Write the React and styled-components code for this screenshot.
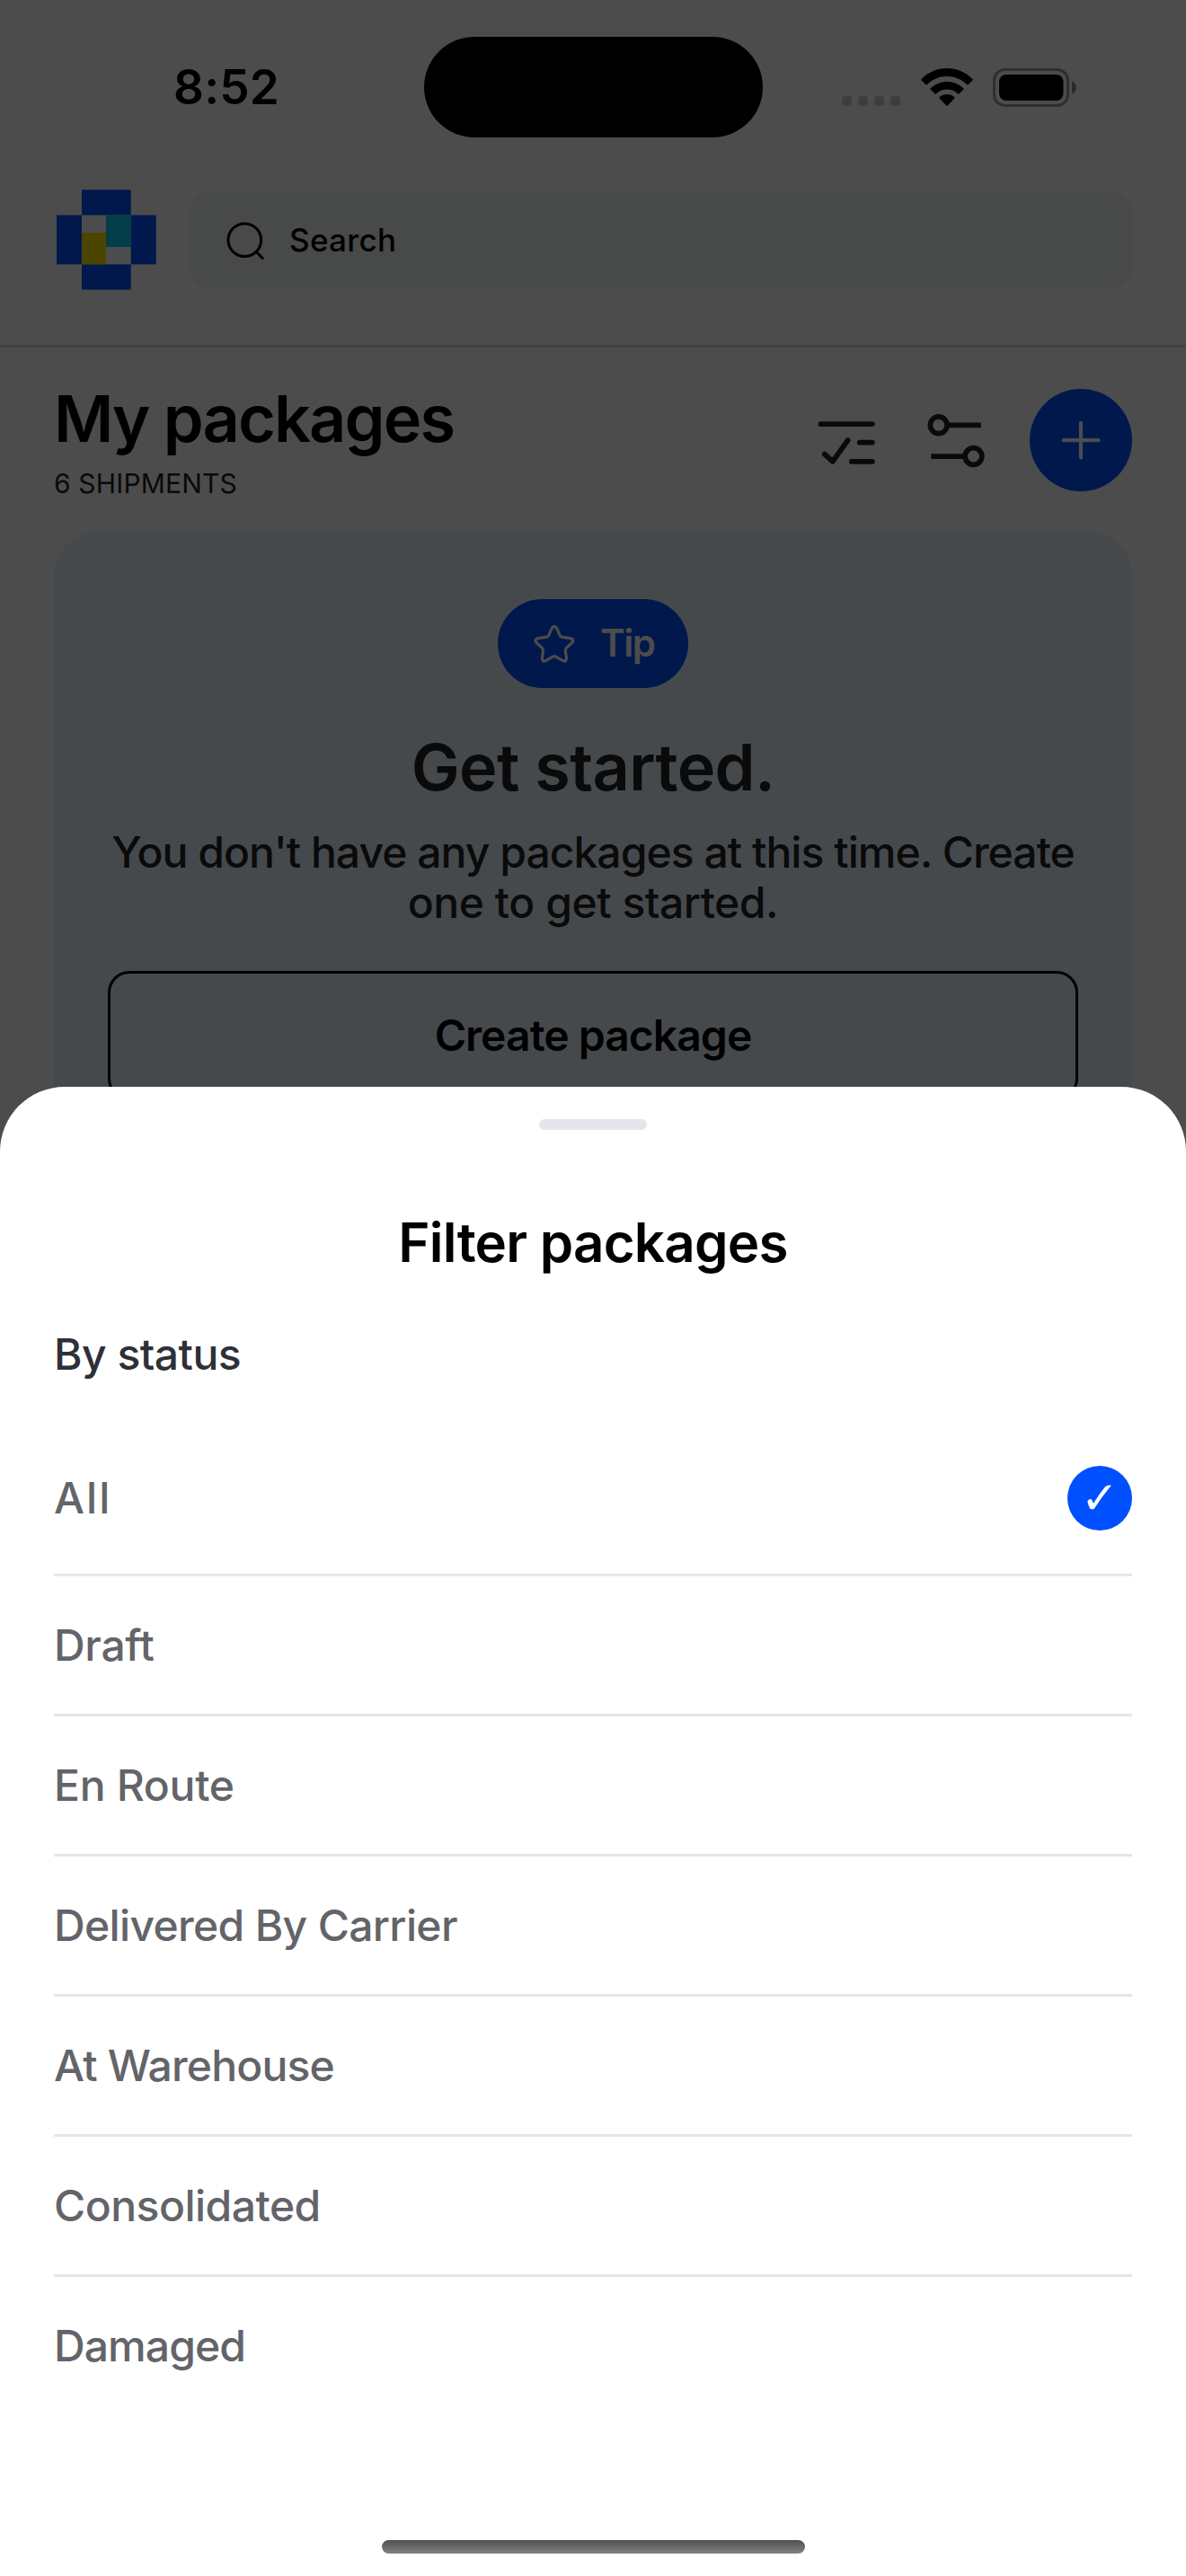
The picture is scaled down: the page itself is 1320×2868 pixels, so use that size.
import React from 'react';
import styled, { createGlobalStyle } from 'styled-components';

const GlobalStyle = createGlobalStyle`
  *, *::before, *::after { box-sizing: border-box; }
  body {
    margin: 0;
    background: #fff;
    font-family: Inter, 'Liberation Sans', sans-serif;
    -webkit-font-smoothing: antialiased;
  }
`;

const BLUE = '#0050ff';

const Screen = styled.div`
  position: relative;
  width: 1320px;
  height: 2868px;
  overflow: hidden;
  background: #fff;
`;

/* Status bar */
const StatusBar = styled.div`
  display: grid;
  grid-template-columns: 471.5px 377px 1fr;
  align-items: center;
  height: 194px;
`;

const Clock = styled.span`
  padding-left: 193px;
  font-size: 53px;
  font-weight: 600;
  line-height: 64px;
  letter-spacing: 0.2px;
`;

const Island = styled.div`
  height: 111.5px;
  border-radius: 56px;
  background: #000;
`;

const Indicators = styled.div`
  display: flex;
  align-items: center;
  gap: 22.5px;
  padding-left: 88.5px;
`;

/* Header */
const Header = styled.header`
  display: flex;
  align-items: flex-start;
  gap: 36px;
  height: 193px;
  padding: 16px 60px 0;
  border-bottom: 3px solid #dcdcdc;
`;

const SearchField = styled.div`
  display: flex;
  flex: 1;
  align-items: center;
  gap: 26px;
  height: 108px;
  margin-top: 3px;
  padding-left: 42px;
  padding-bottom: 1px;
  border-radius: 24px;
  background: #f0f5f3;
  font-size: 35px;
  font-weight: 500;
  line-height: 44px;
  letter-spacing: 0.3px;
`;

/* Page heading */
const Heading = styled.section`
  display: flex;
  align-items: flex-start;
  justify-content: space-between;
  height: 205px;
  padding: 36px 60px 0;
`;

const TitleGroup = styled.div`
  display: flex;
  flex-direction: column;
  gap: 11px;
`;

const PageTitle = styled.h1`
  margin: 0;
  font-size: 72px;
  font-weight: 600;
  line-height: 86px;
  letter-spacing: -1.9px;
`;

const Count = styled.span`
  color: #222;
  font-size: 30px;
  line-height: 37px;
  letter-spacing: 0.15px;
`;

const Actions = styled.div`
  display: flex;
  align-items: center;
  gap: 48px;
  margin-top: 10px;
`;

const AddButton = styled.div`
  display: flex;
  align-items: center;
  justify-content: center;
  width: 114px;
  height: 114px;
  border-radius: 50%;
  background: ${BLUE};
`;

/* Tip card */
const Card = styled.section`
  display: flex;
  flex-direction: column;
  align-items: center;
  height: 700px;
  margin: 0 60px;
  padding: 75px 60px 0;
  border-radius: 48px;
  background: #e9f6fd;
  color: #222;
`;

const TipPill = styled.div`
  display: flex;
  align-items: center;
  gap: 27px;
  width: 212px;
  height: 99px;
  padding-left: 39px;
  padding-bottom: 1px;
  border-radius: 50px;
  background: ${BLUE};
  color: #fff;
  font-size: 42px;
  font-weight: 600;
  line-height: 50px;
  letter-spacing: -1.5px;
`;

const CardTitle = styled.h2`
  margin: 45px 0 0;
  font-size: 72px;
  font-weight: 600;
  line-height: 86px;
  letter-spacing: -0.6px;
`;

const CardText = styled.p`
  display: flex;
  flex-direction: column;
  align-items: center;
  margin: 23.5px 0 48.5px;
  font-size: 48px;
  font-weight: 500;
  line-height: 56px;
  white-space: nowrap;
`;

const TextLine = styled.span`
  letter-spacing: ${(p) => p.$track}px;
`;

const OutlineButton = styled.div`
  display: flex;
  align-items: center;
  justify-content: center;
  align-self: stretch;
  height: 144px;
  padding-bottom: 2px;
  border: 3px solid #000;
  border-radius: 24px;
  color: #000;
  font-size: 48px;
  font-weight: 600;
  letter-spacing: -0.95px;
`;

/* Bottom sheet */
const Backdrop = styled.div`
  position: absolute;
  inset: 0;
  background: rgba(0, 0, 0, 0.7);
`;

const Sheet = styled.section`
  position: absolute;
  right: 0;
  bottom: 0;
  left: 0;
  display: flex;
  flex-direction: column;
  height: 1658px;
  padding: 36px 60px 25px;
  border-radius: 72px 72px 0 0;
  background: #fff;
`;

const Handle = styled.div`
  align-self: center;
  width: 120px;
  height: 12px;
  border-radius: 6px;
  background: #e5e6eb;
`;

const SheetTitle = styled.h2`
  margin: 89px 0 0;
  font-size: 60px;
  font-weight: 600;
  line-height: 72px;
  letter-spacing: -0.75px;
  text-align: center;
`;

const GroupLabel = styled.h3`
  margin: 59.5px 0 47.5px;
  color: #2e3038;
  font-size: 48px;
  font-weight: 500;
  line-height: 58px;
  letter-spacing: -0.5px;
`;

const Options = styled.ul`
  display: flex;
  flex-direction: column;
  margin: 0;
  padding: 0;
  list-style: none;
`;

const Option = styled.li`
  display: flex;
  align-items: center;
  justify-content: space-between;
  height: ${(p) => (p.$selected ? 171 : 156)}px;
  border-bottom: 3px solid #e5e6eb;
  color: #636469;
  font-size: 48px;
  font-weight: 500;
  line-height: 58px;
  letter-spacing: ${(p) => p.$track}px;

  &:last-child {
    height: 153px;
    border-bottom: 0;
  }
`;

const Check = styled.span`
  display: flex;
  align-items: center;
  justify-content: center;
  width: 72px;
  height: 72px;
  border-radius: 50%;
  background: ${BLUE};
  color: #fff;
  font-family: 'DejaVu Sans', sans-serif;
  font-size: 50px;
  font-weight: 400;
  line-height: 72px;
  letter-spacing: 0;
`;

const HomeIndicator = styled.div`
  align-self: center;
  width: 471px;
  height: 15px;
  margin-top: auto;
  border-radius: 8px;
  background: linear-gradient(#505050, #828282);
`;

const Svg = styled.svg`
  display: block;
  flex: none;
`;

const SignalDots = () => (
  <Svg width="65" height="43" viewBox="0 0 65 43" fill="#000" fillOpacity="0.2">
    {[0, 18, 36, 54].map((x) => (
      <rect key={x} x={x} y="31" width="11" height="11" rx="4" />
    ))}
  </Svg>
);

const Wifi = () => (
  <Svg width="58" height="43" viewBox="0 0 58 43" fill="#000">
    <path d="M29 0C40 0 50.300 4.400 57.600 12.200Q58 12.800 57.500 13.400L52.600 18.200Q52 18.700 51.400 18.200C45.400 12.200 37.500 8.900 29 8.900S12.600 12.200 6.600 18.200Q6 18.700 5.400 18.200L0.500 13.400Q0 12.800 0.400 12.200C7.700 4.400 18 0 29 0Z" />
    <path d="M29 14.900C36 14.900 42.500 17.600 47.400 22.200Q48 22.900 47.400 23.500L42.400 28.400Q41.800 29 41.100 28.400C37.800 25.300 33.600 23.500 29 23.500S20.200 25.300 16.900 28.400Q16.200 29 15.600 28.400L10.600 23.500Q10 22.900 10.600 22.200C15.500 17.600 22 14.900 29 14.900Z" />
    <path d="M29 28.900C32.200 28.900 35.100 30.100 37.300 32.100Q38 32.800 37.400 33.500L29.700 41.500Q29 42.200 28.300 41.500L20.600 33.500Q20 32.800 20.700 32.100C22.900 30.100 25.800 28.900 29 28.900Z" />
  </Svg>
);

const Battery = () => (
  <Svg width="93" height="43" viewBox="0 0 93 43" fill="#000">
    <rect x="1.500" y="1.500" width="82" height="40" rx="12" fill="none" stroke="#000" strokeOpacity="0.4" strokeWidth="3" />
    <rect x="7" y="7" width="71.500" height="29" rx="8" />
    <path d="M88 14.500C91 15.600 93 18.400 93 21.500S91 27.400 88 28.500Z" fillOpacity="0.45" />
  </Svg>
);

const Logo = () => (
  <Svg width="114" height="114" viewBox="60 210 114 114">
    <rect x="91" y="211.300" width="54.700" height="28.200" fill={BLUE} />
    <rect x="91" y="294.300" width="54.700" height="28.200" fill={BLUE} />
    <rect x="63" y="239.500" width="28" height="54.800" fill={BLUE} />
    <rect x="145.700" y="239.500" width="28" height="54.800" fill={BLUE} />
    <rect x="91" y="259" width="27" height="35.300" fill="#ffe800" />
    <rect x="118" y="239.500" width="27.700" height="35.500" fill="#0dcbf3" />
  </Svg>
);

const SearchIcon = () => (
  <Svg width="44" height="44" viewBox="252 244.500 44 44" fill="none" stroke="#000" strokeWidth="3" strokeLinecap="round">
    <circle cx="272.300" cy="266.700" r="18.300" />
    <path d="M285.500 280L292.200 287" />
  </Svg>
);

const ChecklistIcon = () => (
  <Svg width="72" height="72" viewBox="906 454 72 72" fill="none" stroke="#222" strokeWidth="5.800" strokeLinecap="round" strokeLinejoin="round">
    <path d="M913.300 472.100H970.800M956.800 492.700H970.800M947.800 513.900H970.800M917.800 505.600L926.700 513.800L943.600 490.200" />
  </Svg>
);

const FilterIcon = () => (
  <Svg width="72" height="72" viewBox="1026 454 72 72" fill="none" stroke="#222" strokeWidth="5.700">
    <circle cx="1044.700" cy="473.300" r="9.350" />
    <circle cx="1083.500" cy="508" r="9.350" />
    <path d="M1055 473.400H1091.800M1036.300 508.100H1073" />
  </Svg>
);

const PlusIcon = () => (
  <Svg width="48" height="48" viewBox="0 0 48 48" fill="none" stroke="#fff" strokeWidth="4.200" strokeLinecap="round">
    <path d="M4.600 24.200H43.400M24 4.800V43.600" />
  </Svg>
);

const StarIcon = () => (
  <Svg width="48" height="48" viewBox="43 32 48 48" fill="none" stroke="#fff" strokeWidth="3.200" strokeLinejoin="round">
    <path d="M63.400 41Q66.900 33.800 70.400 41L72.900 47Q73.800 49.200 76 49.400L83.500 50.300Q90.800 51.600 85.800 56.400L80.600 61.200Q79 62.800 79.300 64.600L80.400 72Q80.800 78 75.600 75.200L68.600 71.200Q66.900 70.200 65.200 71.200L58.200 75.200Q53 78 53.400 72L54.500 64.600Q54.800 62.800 53.200 61.200L48 56.400Q43 51.600 50.300 50.300L57.800 49.400Q60 49.200 60.900 47Z" />
  </Svg>
);

const statuses = [
  { label: 'All', track: 2, selected: true },
  { label: 'Draft', track: -0.3 },
  { label: 'En Route', track: -0.3 },
  { label: 'Delivered By Carrier', track: -0.65 },
  { label: 'At Warehouse', track: -0.8 },
  { label: 'Consolidated', track: -0.5 },
  { label: 'Damaged', track: -0.9 },
];

export default function App() {
  return (
    <Screen>
      <GlobalStyle />
      <StatusBar>
        <Clock>8:52</Clock>
        <Island />
        <Indicators>
          <SignalDots />
          <Wifi />
          <Battery />
        </Indicators>
      </StatusBar>

      <Header>
        <Logo />
        <SearchField>
          <SearchIcon />
          Search
        </SearchField>
      </Header>

      <Heading>
        <TitleGroup>
          <PageTitle>My packages</PageTitle>
          <Count>6 SHIPMENTS</Count>
        </TitleGroup>
        <Actions>
          <ChecklistIcon />
          <FilterIcon />
          <AddButton>
            <PlusIcon />
          </AddButton>
        </Actions>
      </Heading>

      <Card>
        <TipPill>
          <StarIcon />
          Tip
        </TipPill>
        <CardTitle>Get started.</CardTitle>
        <CardText>
          <TextLine $track={-0.95}>You don't have any packages at this time. Create</TextLine>
          <TextLine $track={-0.45}>one to get started.</TextLine>
        </CardText>
        <OutlineButton>Create package</OutlineButton>
      </Card>

      <Backdrop />

      <Sheet>
        <Handle />
        <SheetTitle>Filter packages</SheetTitle>
        <GroupLabel>By status</GroupLabel>
        <Options>
          {statuses.map(({ label, track, selected }) => (
            <Option key={label} $track={track} $selected={selected}>
              {label}
              {selected && <Check>✓</Check>}
            </Option>
          ))}
        </Options>
        <HomeIndicator />
      </Sheet>
    </Screen>
  );
}
